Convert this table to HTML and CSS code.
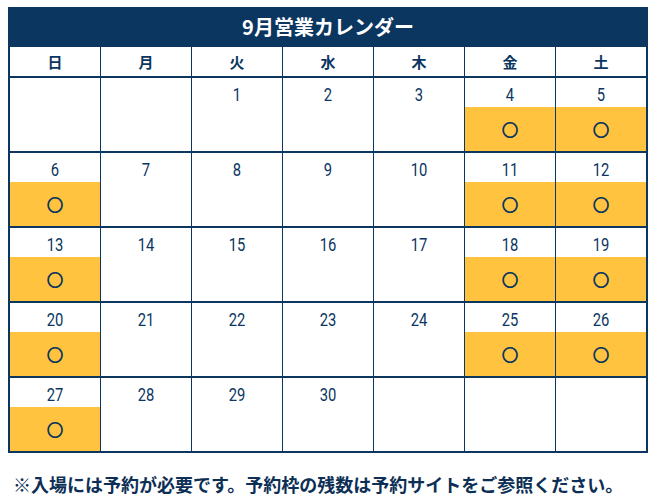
FILE: index.html
```html
<!DOCTYPE html>
<html lang="ja">
<head>
<meta charset="utf-8">
<title>9月営業カレンダー</title>
<link rel="stylesheet" href="styles.css">
</head>
<body>
<div class="calendar">
  <div class="cal-title">9月営業カレンダー</div>
  <div class="grid">
    <div class="wd">日</div><div class="wd">月</div><div class="wd">火</div><div class="wd">水</div><div class="wd">木</div><div class="wd">金</div><div class="wd">土</div>

    <div class="day"></div>
    <div class="day"></div>
    <div class="day"><div class="num">1</div></div>
    <div class="day"><div class="num">2</div></div>
    <div class="day"><div class="num">3</div></div>
    <div class="day"><div class="num">4</div><div class="mark">○</div></div>
    <div class="day"><div class="num">5</div><div class="mark">○</div></div>

    <div class="day"><div class="num">6</div><div class="mark">○</div></div>
    <div class="day"><div class="num">7</div></div>
    <div class="day"><div class="num">8</div></div>
    <div class="day"><div class="num">9</div></div>
    <div class="day"><div class="num">10</div></div>
    <div class="day"><div class="num">11</div><div class="mark">○</div></div>
    <div class="day"><div class="num">12</div><div class="mark">○</div></div>

    <div class="day"><div class="num">13</div><div class="mark">○</div></div>
    <div class="day"><div class="num">14</div></div>
    <div class="day"><div class="num">15</div></div>
    <div class="day"><div class="num">16</div></div>
    <div class="day"><div class="num">17</div></div>
    <div class="day"><div class="num">18</div><div class="mark">○</div></div>
    <div class="day"><div class="num">19</div><div class="mark">○</div></div>

    <div class="day"><div class="num">20</div><div class="mark">○</div></div>
    <div class="day"><div class="num">21</div></div>
    <div class="day"><div class="num">22</div></div>
    <div class="day"><div class="num">23</div></div>
    <div class="day"><div class="num">24</div></div>
    <div class="day"><div class="num">25</div><div class="mark">○</div></div>
    <div class="day"><div class="num">26</div><div class="mark">○</div></div>

    <div class="day"><div class="num">27</div><div class="mark">○</div></div>
    <div class="day"><div class="num">28</div></div>
    <div class="day"><div class="num">29</div></div>
    <div class="day"><div class="num">30</div></div>
    <div class="day"></div>
    <div class="day"></div>
    <div class="day"></div>
  </div>
</div>
<p class="note">※入場には予約が必要です。予約枠の残数は予約サイトをご参照ください。</p>
</body>
</html>
```
FILE: styles.css
```css
html, body {
  margin: 0;
  padding: 0;
  background: #ffffff;
}

body {
  font-family: "Noto Sans CJK JP", "Noto Sans", sans-serif;
  color: #0b365f;
}

.calendar {
  width: 640px;
  box-sizing: border-box;
  margin: 7px 0 0 8px;
  border: 2px solid #0b365f;
  background: #0b365f;
}

.cal-title {
  height: 38px;
  line-height: 36px;
  text-align: center;
  color: #ffffff;
  font-weight: 700;
  font-size: 20px;
}

.grid {
  display: grid;
  grid-template-columns: repeat(7, 90px);
  grid-template-rows: 29px repeat(5, 73px);
  column-gap: 1px;
  row-gap: 2px;
}

.wd {
  background: #ffffff;
  text-align: center;
  font-weight: 700;
  font-size: 15px;
  line-height: 29px;
  color: #0b365f;
}

.day {
  background: #ffffff;
  display: flex;
  flex-direction: column;
}

.num {
  height: 29px;
  box-sizing: border-box;
  padding-top: 2px;
  line-height: 29px;
  text-align: center;
  font-family: "Roboto", "Liberation Sans", sans-serif;
  font-size: 18px;
  color: #0b365f;
  transform: scaleX(0.82);
}

.mark {
  height: 44px;
  background: #ffc340;
  text-align: center;
  line-height: 44px;
  font-size: 16px;
  color: #0b365f;
  -webkit-text-stroke: 1px #0b365f;
}

.note {
  margin: 18px 0 0 13px;
  font-size: 18px;
  line-height: 26px;
  font-weight: 700;
  color: #0d2f55;
}
```
